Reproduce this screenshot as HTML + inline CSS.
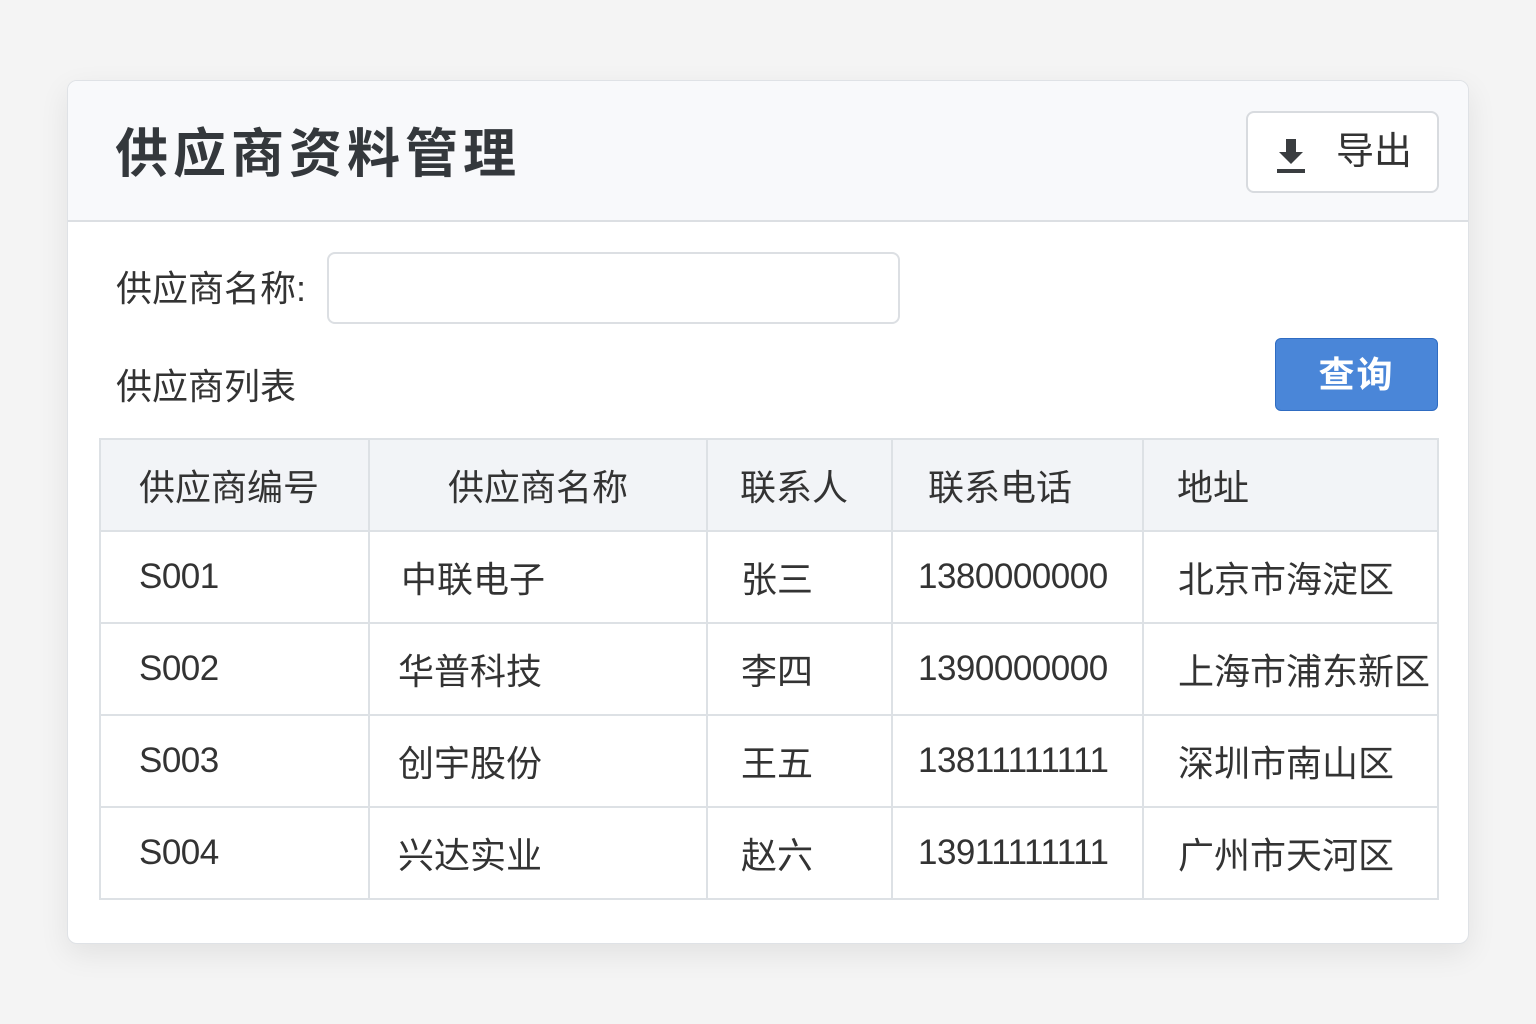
<!DOCTYPE html>
<html><head><meta charset="utf-8"><style>
*{margin:0;padding:0;box-sizing:border-box}
body{width:1536px;height:1024px;background:#f4f4f4;font-family:"Liberation Sans","Noto Sans CJK SC",sans-serif;color:#333;position:relative;overflow:hidden}
.card{position:absolute;left:67px;top:80px;width:1402px;height:864px;background:#fff;border:1px solid #dfe2e6;border-radius:10px;box-shadow:0 10px 30px rgba(0,0,0,0.08);overflow:hidden}
.hdr{position:absolute;left:0;top:0;width:100%;height:141px;background:#f8f9fb;border-bottom:2px solid #dcdfe3}
.title{position:absolute;left:47px;top:42px;font-size:53px;font-weight:bold;color:#34383c;letter-spacing:5px;line-height:64px}
.exp{position:absolute;left:1178px;top:30px;width:193px;height:82px;border:2px solid #d8dbdf;border-radius:8px;background:#fff}
.exp span{position:absolute;left:88px;top:16px;font-size:38px;line-height:46px;color:#333}
.exp svg{position:absolute;left:26px;top:24px}
.lbl{position:absolute;font-size:36px;line-height:40px;color:#333}
.inp{position:absolute;left:259px;top:171px;width:573px;height:72px;border:2px solid #dcdfe3;border-radius:8px}
.btn{position:absolute;left:1207px;top:257px;width:163px;height:73px;background:#4a86d8;border:1px solid #2f6cc2;border-radius:6px;color:#fff;font-size:36px;font-weight:bold;text-align:center;line-height:71px;letter-spacing:2px}
table{position:absolute;left:31px;top:357px;border-collapse:collapse;font-size:36px;table-layout:fixed}
td,th{border:2px solid #dde1e5;height:92px;font-weight:normal;text-align:left;white-space:nowrap;overflow:visible;color:#333}
th{background:#f2f4f7}
.n{font-size:35px;letter-spacing:-0.5px}
</style></head><body>
<div class="card">
<div class="hdr"><div class="title">供应商资料管理</div>
<div class="exp"><svg width="34" height="38" viewBox="0 0 34 38"><path d="M12 2h10v13h7L17 27 5 15h7z" fill="#3a3d40"/><rect x="3" y="32" width="28" height="4" fill="#3a3d40"/></svg><span>导出</span></div></div>
<div class="lbl" style="left:48px;top:188px">供应商名称:</div>
<div class="inp"></div>
<div class="lbl" style="left:48px;top:286px">供应商列表</div>
<div class="btn">查询</div>
<table>
<colgroup><col style="width:269px"><col style="width:338px"><col style="width:185px"><col style="width:251px"><col style="width:295px"></colgroup>
<tr><th style="padding-left:38px">供应商编号</th><th style="text-align:center">供应商名称</th><th style="padding-left:32px">联系人</th><th style="padding-left:35px">联系电话</th><th style="padding-left:33px">地址</th></tr>
<tr><td class="n" style="padding-left:38px">S001</td><td style="padding-left:31px">中联电子</td><td style="padding-left:33px">张三</td><td class="n" style="padding-left:25px">1380000000</td><td style="padding-left:34px">北京市海淀区</td></tr>
<tr><td class="n" style="padding-left:38px">S002</td><td style="padding-left:28px">华普科技</td><td style="padding-left:33px">李四</td><td class="n" style="padding-left:25px">1390000000</td><td style="padding-left:34px">上海市浦东新区</td></tr>
<tr><td class="n" style="padding-left:38px">S003</td><td style="padding-left:28px">创宇股份</td><td style="padding-left:33px">王五</td><td class="n" style="padding-left:25px">13811111111</td><td style="padding-left:34px">深圳市南山区</td></tr>
<tr><td class="n" style="padding-left:38px">S004</td><td style="padding-left:28px">兴达实业</td><td style="padding-left:33px">赵六</td><td class="n" style="padding-left:25px">13911111111</td><td style="padding-left:34px">广州市天河区</td></tr>
</table>
</div>
</body></html>
